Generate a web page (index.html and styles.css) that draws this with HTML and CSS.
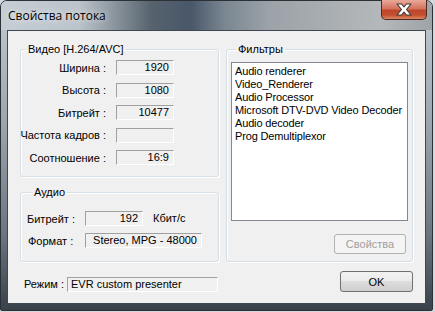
FILE: index.html
```html
<!DOCTYPE html>
<html>
	<head>
		<meta charset="UTF-8">
		<title>Свойства потока</title>
		<link rel="stylesheet" href="styles.css">
	</head>
	<body>
		<div class="window">
			<div class="titlebar">
				<span class="caption">Свойства потока</span>
				<span class="close">
					<svg width="18" height="13" viewBox="0 0 18 13">
						<path d="M2 1h4.6l2.4 3 2.4-3h4.6l-4.5 5.5 4.5 5.5h-4.6l-2.4-3-2.4 3h-4.6l4.5-5.5z" fill="#fff" stroke="#3a3a3a" stroke-width="1.1" stroke-linejoin="round"/>
					</svg>
				</span>
			</div>
			<div class="client">
				<div class="columns">
					<div class="left">
						<!--видео-->
						<fieldset class="group video">
							<legend>Видео [H.264/AVC]</legend>
							<div class="grid">
								<div class="lbl"><span>Ширина :</span></div><div class="field num">1920</div>
								<div class="lbl"><span>Высота :</span></div><div class="field num">1080</div>
								<div class="lbl"><span>Битрейт :</span></div><div class="field num">10477</div>
								<div class="lbl"><span>Частота кадров :</span></div><div class="field num"></div>
								<div class="lbl"><span>Соотношение :</span></div><div class="field num">16:9</div>
							</div>
						</fieldset>
						<!--аудио-->
						<fieldset class="group audio">
							<legend>Аудио</legend>
							<div class="arow">
								<span class="alabel">Битрейт :</span>
								<div class="field num abit">192</div>
								<span class="unit">Кбит/с</span>
							</div>
							<div class="arow">
								<span class="alabel fmt">Формат :</span>
								<div class="field num aformat">Stereo, MPG - 48000</div>
							</div>
						</fieldset>
					</div>
					<!--фильтры-->
					<fieldset class="group filters">
						<legend>Фильтры</legend>
						<ul class="list">
							<li>Audio renderer</li>
							<li>Video_Renderer</li>
							<li>Audio Processor</li>
							<li>Microsoft DTV-DVD Video Decoder</li>
							<li>Audio decoder</li>
							<li>Prog Demultiplexor</li>
						</ul>
						<div class="btnrow">
							<button class="btn disabled">Свойства</button>
						</div>
					</fieldset>
				</div>
				<div class="bottom">
					<span class="mode">Режим :</span>
					<div class="field modebox">EVR custom presenter</div>
					<button class="btn ok">OK</button>
				</div>
			</div>
		</div>
	</body>
</html>
```

FILE: styles.css
```css
html,body{
	margin: 0;
	padding: 0;
}
body{
	background: #d4d8dc;
	width: 435px;
	height: 312px;
	overflow: hidden;
	font: 11px "Liberation Sans", Arial, sans-serif;
	color: #000;
}
.window{
	width: 433px;
	height: 311px;
	box-sizing: border-box;
	border: 1px solid #2c3136;
	border-radius: 7px 7px 2px 2px;
	padding: 0 6px 6px 6px;
	background: linear-gradient(to bottom, #c3cbd2 0%, #9aa5ae 40%, #6c7680 75%, #39424b 100%);
	display: flex;
	flex-direction: column;
}
.titlebar{
	height: 29px;
	margin: 0 -6px;
	padding: 0 5px 0 7px;
	display: flex;
	align-items: flex-start;
	justify-content: space-between;
	border-radius: 6px 6px 0 0;
	background: linear-gradient(to right, #c6ced5 0%, #bcc4cb 18%, #8d979f 26%, #56626d 35%, #49576a 44%, #7b8791 52%, #9ba2a8 62%, #a8adb1 75%, #b4b8bb 88%, #9ea3a7 100%);
}
.caption{
	font: 12px "Open Sans", "Noto Sans", sans-serif;
	line-height: 14px;
	margin-top: 8px;
	color: #000;
	text-shadow: 0 0 6px rgba(255,255,255,0.9);
}
.close{
	width: 46px;
	height: 20px;
	margin-top: -1px;
	box-sizing: border-box;
	border: 1px solid #4a2a22;
	border-top: none;
	border-radius: 0 0 5px 5px;
	background: linear-gradient(to bottom, #e9a99a 0%, #d5735d 45%, #c0452c 55%, #c4502f 80%, #dc8a66 100%);
	display: flex;
	align-items: center;
	justify-content: center;
}
.client{
	flex: 1;
	background: #f0f0f0;
	border: 1px solid #3f4850;
	display: flex;
	flex-direction: column;
	padding: 12px 12px 0 12px;
}
.columns{
	display: flex;
	gap: 7px;
}
.left{
	width: 199px;
	display: flex;
	flex-direction: column;
	gap: 9px;
}
.group{
	margin: 0;
	padding: 0;
	border: 1px solid #d5dfe5;
	border-radius: 3px;
	box-shadow: inset 1px 1px 0 #fff, 1px 1px 0 #fff;
}
.group legend{
	padding: 0 2px;
	margin-left: 5px;
	line-height: 13px;
}
.video{
	height: 134px;
	box-sizing: border-box;
}
.grid{
	display: grid;
	grid-template-columns: 85px 58px;
	grid-template-rows: repeat(5, 15px);
	row-gap: 7.5px;
	column-gap: 10px;
	margin-top: 4px;
}
.lbl{
	display: flex;
	justify-content: flex-end;
	align-items: center;
	white-space: nowrap;
}
.field{
	box-sizing: border-box;
	height: 15px;
	border: 1px solid #a0a0a0;
	border-right-color: #fff;
	border-bottom-color: #fff;
	line-height: 13px;
	white-space: nowrap;
}
.num{
	text-align: right;
	padding-right: 4px;
}
.audio{
	height: 76px;
	box-sizing: border-box;
	padding: 12px 0 0 6px;
}
.arow{
	display: flex;
	align-items: center;
	height: 15px;
	margin-bottom: 7px;
}
.alabel{
	width: 58px;
}
.fmt{
	padding-left: 1px;
	width: 57px;
}
.abit{
	width: 58px;
}
.unit{
	margin-left: 10px;
	margin-top: -2px;
}
.aformat{
	width: 117px;
}
.filters{
	width: 187px;
	height: 219px;
	box-sizing: border-box;
	padding: 6px 4px 0 4px;
	display: flex;
	flex-direction: column;
}
.list{
	list-style: none;
	margin: 0;
	padding: 2px 0 2px 3px;
	height: 159px;
	box-sizing: border-box;
	background: #fff;
	border: 1px solid #828790;
	line-height: 13px;
	white-space: nowrap;
	letter-spacing: -0.15px;
	overflow: hidden;
}
.btnrow{
	display: flex;
	justify-content: flex-end;
	padding: 13px 2px 0 0;
}
.btn{
	box-sizing: border-box;
	font: 11px "Liberation Sans", Arial, sans-serif;
	border-radius: 3px;
	padding: 0;
}
.disabled{
	width: 72px;
	height: 20px;
	border: 1px solid #adb2b5;
	background: #f4f4f4;
	color: #a0a0a0;
}
.bottom{
	display: flex;
	align-items: flex-start;
	margin-top: 9px;
	padding-left: 4px;
}
.mode{
	width: 43px;
	margin-top: 6px;
	line-height: 15px;
}
.modebox{
	width: 151px;
	padding-left: 3px;
	margin-top: 6px;
}
.ok{
	margin-left: auto;
	width: 73px;
	height: 21px;
	border: 1px solid #707070;
	background: linear-gradient(to bottom, #f2f2f2 0%, #ebebeb 50%, #dddddd 50%, #cfcfcf 100%);
	color: #000;
}
```
